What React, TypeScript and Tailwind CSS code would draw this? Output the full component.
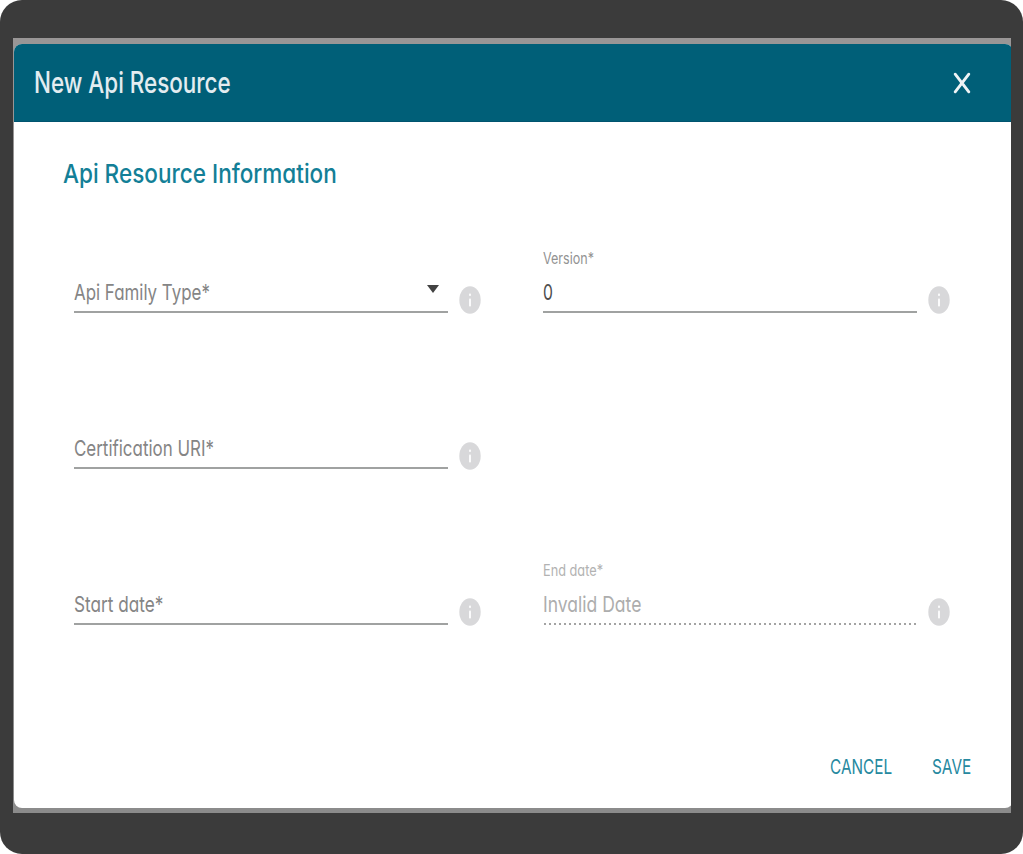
import { useLayoutEffect, useRef, useState } from "react";
import type { ReactNode } from "react";

/* Condenses one line of text to the width of its box. */
function Condensed({ className, children }: { className: string; children: ReactNode }) {
  const box = useRef<HTMLSpanElement>(null);
  const line = useRef<HTMLSpanElement>(null);
  const [scale, setScale] = useState(1);
  useLayoutEffect(() => {
    if (box.current && line.current) {
      setScale(box.current.offsetWidth / line.current.offsetWidth);
    }
  }, []);
  return (
    <span ref={box} className={`block whitespace-nowrap ${className}`}>
      <span ref={line} className="inline-block origin-left" style={{ transform: `scaleX(${scale})` }}>
        {children}
      </span>
    </span>
  );
}

function InfoIcon() {
  return (
    <svg className="mb-[-1px] ml-[11px] h-[28px] w-[22px] shrink-0" viewBox="0 0 22 28" aria-hidden="true">
      <ellipse cx="11" cy="14" rx="10.7" ry="13.8" fill="#d8d8da" />
      <rect x="10" y="7.6" width="2" height="2.4" rx="0.8" fill="#fff" fillOpacity="0.9" />
      <rect x="10" y="12.4" width="2" height="8.2" rx="0.8" fill="#fff" fillOpacity="0.9" />
    </svg>
  );
}

type FieldProps = {
  label?: ReactNode;
  value: ReactNode;
  dropdown?: boolean;
  dotted?: boolean;
};

function Field({ label, value, dropdown, dotted }: FieldProps) {
  return (
    <div className="flex h-[156px] items-start">
      <div className="flex items-end">
        <div className="w-[374px]">
          <div className="h-[24px] leading-[24px]">{label}</div>
          <div className="mt-[5px] mb-[3px] flex h-[32px] items-center justify-between">
            {value}
            {dropdown && (
              <svg className="mr-[9px] mb-[6px] h-[8px] w-[12px]" viewBox="0 0 12 8" aria-hidden="true">
                <path d="M0 0H12L6 8Z" fill="#424242" />
              </svg>
            )}
          </div>
          {dotted ? (
            <div className="h-[2px] bg-[repeating-linear-gradient(90deg,#fff_0_1px,#a3a3a3_1px_3px,#fff_3px_5px)]" />
          ) : (
            <div className="h-[2px] bg-[#a0a2a1]" />
          )}
        </div>
        <InfoIcon />
      </div>
    </div>
  );
}

export default function App() {
  return (
    <main className="h-[854px] w-[1023px] overflow-hidden rounded-[22px] bg-[#3b3b3b] pt-[38px] pl-[13px] font-['Inter',sans-serif] [font-feature-settings:'cv11','ss03']">
      <div className="h-[775px] w-[998px] overflow-hidden bg-linear-to-b from-[#999696] to-[#8b8b8b] pt-[6px] pl-[1px]">
        <section className="flex h-[764px] w-[999px] flex-col overflow-hidden rounded-[8px] bg-white">
          <header className="flex h-[78px] shrink-0 items-center justify-between border-b border-[#00546f] bg-[#005f78] pr-[42px] pl-[20px]">
            <h1 className="text-[29.5px] font-medium text-[#e3ecf0]">
              <Condensed className="w-[197px]">New Api Resource</Condensed>
            </h1>
            <button aria-label="Close">
              <svg className="h-[22px] w-[18px]" viewBox="0 0 18 22" fill="none" stroke="#eef3f5" strokeWidth="2.9" strokeLinecap="round">
                <path d="M2.2 2.2L15.8 19.8M15.8 2.2L2.2 19.8" />
              </svg>
            </button>
          </header>
          <div className="flex flex-1 flex-col pt-[33px] pl-[49px]">
            <h2 className="text-[26px] leading-[38px] font-medium text-[#137f97]">
              <Condensed className="w-[274px]">Api Resource Information</Condensed>
            </h2>
            <div className="mt-[54px] grid grid-cols-[469px_1fr] pl-[11px] text-[22px] leading-[32px] text-[#858585]">
              <Field dropdown value={<Condensed className="w-[136px]">Api Family Type*</Condensed>} />
              <Field
                label={<Condensed className="w-[51px] text-[15.5px] text-[#929292]">Version*</Condensed>}
                value={<Condensed className="w-[10px] text-[#4c4c4c]">0</Condensed>}
              />
              <Field value={<Condensed className="w-[140px]">Certification URI*</Condensed>} />
              <div />
              <Field value={<Condensed className="w-[89px]">Start date*</Condensed>} />
              <Field
                dotted
                label={<Condensed className="w-[60px] text-[15.5px] text-[#b2b2b2]">End date*</Condensed>}
                value={<Condensed className="w-[98px] text-[#adadad]">Invalid Date</Condensed>}
              />
            </div>
          </div>
          <footer className="flex h-[82px] shrink-0 items-center justify-end gap-[40px] pr-[42px] text-[20.5px] text-[#26899f]">
            <button>
              <Condensed className="w-[62px]">CANCEL</Condensed>
            </button>
            <button>
              <Condensed className="w-[39px]">SAVE</Condensed>
            </button>
          </footer>
        </section>
      </div>
    </main>
  );
}
